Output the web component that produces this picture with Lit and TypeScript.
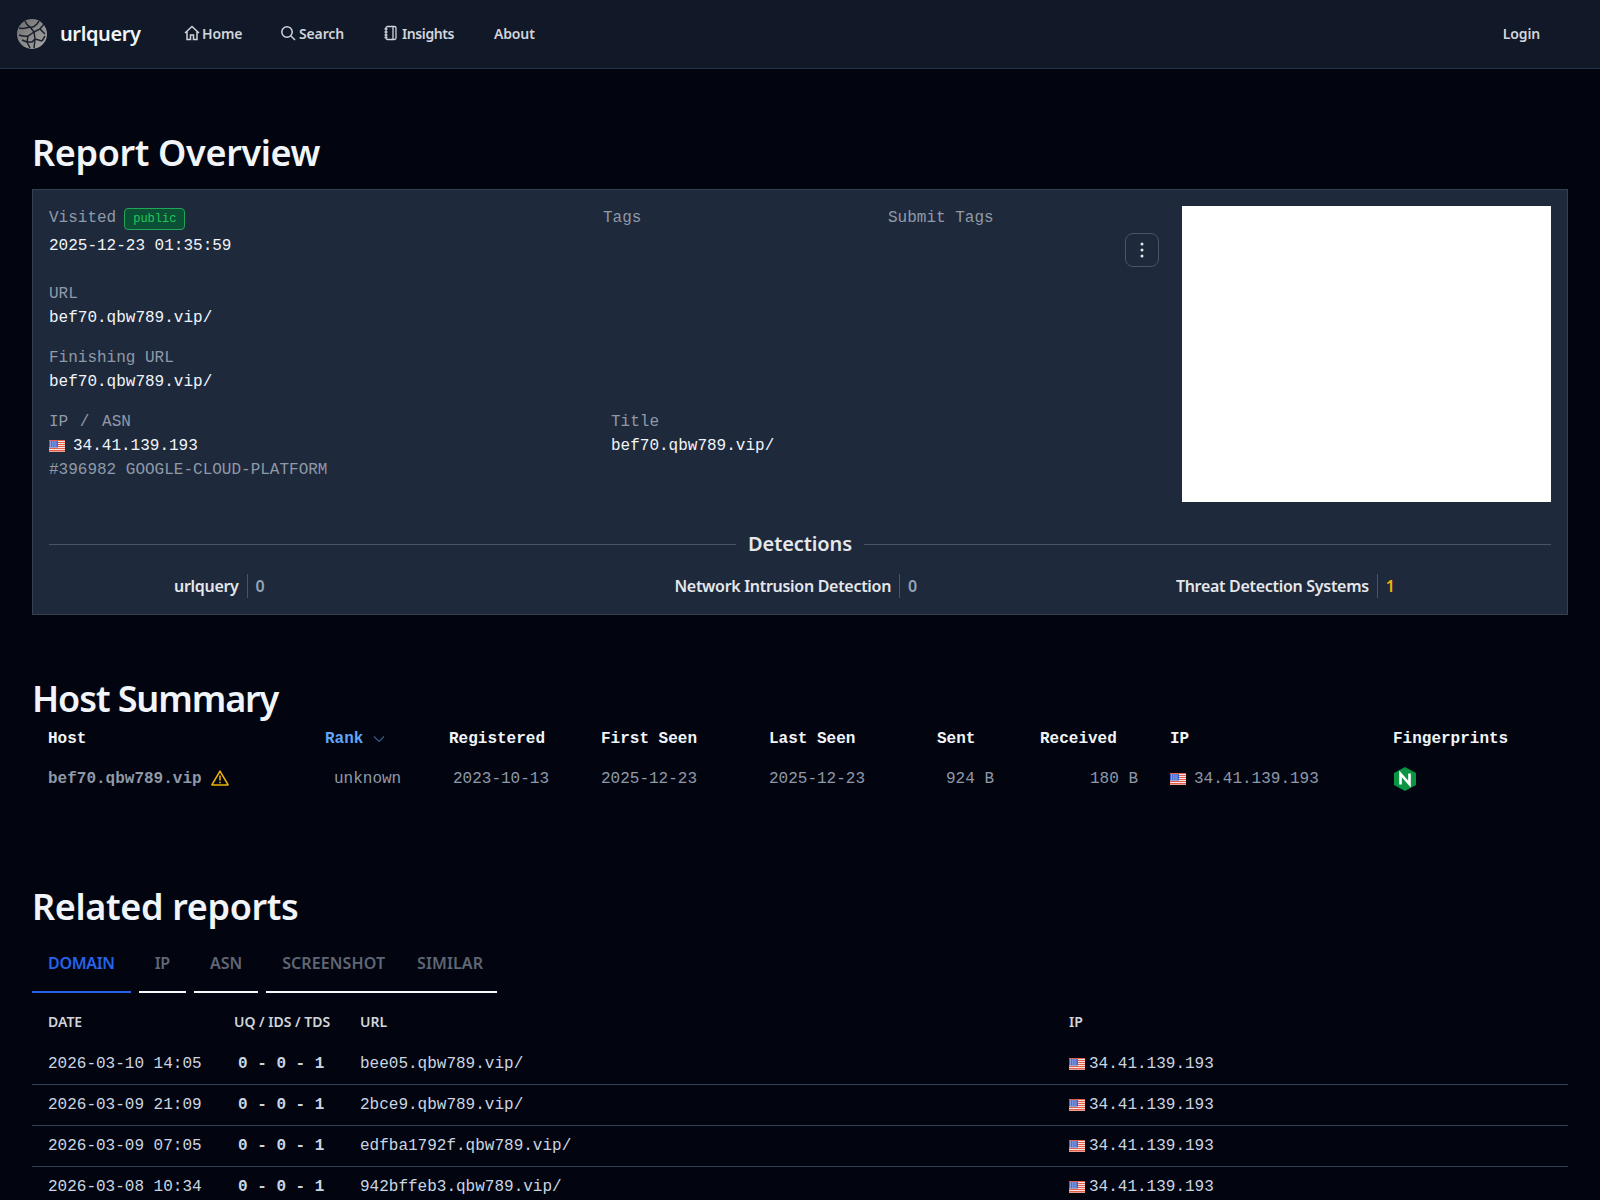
import { LitElement, html, css } from "lit";
import { customElement } from "lit/decorators.js";

const flag = html`<svg class="flag" viewBox="0 0 16 12" width="16" height="12" aria-hidden="true">
  <rect width="16" height="12" fill="#f7e4e0"/>
  <path d="M0 .5h16M0 2.5h16M0 4.5h16M0 6.5h16M0 8.5h16M0 10.5h16" stroke="#e0604c" stroke-width="1"/>
  <path d="M0 11.5h16" stroke="#e9a090" stroke-width="1"/>
  <rect x="0" y="1" width="9" height="6.5" fill="#3f63cc"/>
  <path d="M1 2h7M1 4h7M1 6h7" stroke="#e4eafa" stroke-width=".9" stroke-dasharray="1 .8"/>
</svg>`;

const rows = [
  ["2026-03-10 14:05", "bee05.qbw789.vip/"],
  ["2026-03-09 21:09", "2bce9.qbw789.vip/"],
  ["2026-03-09 07:05", "edfba1792f.qbw789.vip/"],
  ["2026-03-08 10:34", "942bffeb3.qbw789.vip/"],
];

@customElement("app-root")
export class AppRoot extends LitElement {
  static styles = css`
    :host {
      display: block;
      height: 1200px;
      overflow: hidden;
      background: #020510;
      --sans: "Noto Sans", "Open Sans", sans-serif;
      --mono: "Liberation Mono", monospace;
      font-family: var(--mono);
      font-size: 16px;
      color: #f1f5f9;
    }
    nav {
      height: 66px;
      padding: 0 60px 2px 17px;
      box-sizing: content-box;
      background: #111827;
      border-bottom: 1px solid #273244;
      display: flex;
      align-items: center;
      font-family: var(--sans);
      font-size: 14px;
      font-weight: 600;
      letter-spacing: -0.15px;
      color: #d1d5db;
    }
    .logo { margin-right: 13px; flex: none; margin-top: 2px; }
    .brand { font-size: 20px; font-weight: 600; letter-spacing: -0.4px; color: #f3f4f6; width: 124px; }
    .links { display: flex; flex: 1; }
    .link { display: flex; align-items: center; gap: 2px; white-space: nowrap; }
    .link svg { flex: none; }
    .i-gap1 { margin-right: 1px; }
    .l1 { width: 96px; }
    .l2 { width: 104px; }
    .l3 { width: 110px; letter-spacing: -0.4px; }
    .l3 svg { margin-left: -1px; }
    main { padding: 0 32px; }
    h2 {
      font-family: var(--sans);
      font-size: 36px;
      line-height: 40px;
      font-weight: 600;
      color: #f1f5f9;
      margin: 0;
    }
    .h-report { padding-top: 64px; margin-bottom: 16px; letter-spacing: -0.35px; }
    .card {
      background: #1e293b;
      border: 1px solid #334155;
      padding: 16px;
      height: 392px;
      box-sizing: content-box;
    }
    .top { display: grid; grid-template-columns: 1fr 369px; gap: 0 23px; height: 296px; }
    .cols { display: grid; grid-template-columns: 554px 285px 1fr; }
    .label { color: #8f99a8; line-height: 24px; }
    .value { color: #f1f5f9; line-height: 24px; white-space: nowrap; }
    .muted { color: #8f99a8; line-height: 24px; white-space: nowrap; }
    .sl { margin-left: 2px; }
    .asn { margin-left: 3px; }
    .visited { display: flex; gap: 8px; align-items: flex-start; height: 28px; }
    .badge {
      font-size: 12px;
      line-height: 20px;
      color: #22c55e;
      background: #0b5034;
      border: 1px solid #22a559;
      border-radius: 4px;
      padding: 0 8px;
      margin-top: 2px;
    }
    .group { margin-top: 24px; }
    .group + .group { margin-top: 16px; }
    .submit { position: relative; }
    .kebab {
      position: absolute;
      right: 0;
      top: 27px;
      width: 32px;
      height: 32px;
      border: 1px solid #475569;
      border-radius: 8px;
      display: flex;
      align-items: center;
      justify-content: center;
    }
    .ip-row { display: grid; grid-template-columns: 562px 1fr; margin-top: 16px; }
    .ip { display: flex; align-items: center; gap: 8px; }
    .shot { background: #fff; }
    .divider {
      display: flex;
      align-items: center;
      gap: 12px;
      margin-top: 28px;
      font-family: var(--sans);
      font-size: 20px;
      font-weight: 600;
      letter-spacing: -0.1px;
      line-height: 28px;
      color: #e5e7eb;
    }
    .divider::before, .divider::after { content: ""; flex: 1; height: 1px; background: #475569; }
    .det { display: flex; margin-top: 16px; font-family: var(--sans); font-size: 16px; font-weight: 600; letter-spacing: -0.3px; color: #e5e7eb; line-height: 24px; }
    .det > div { display: flex; white-space: nowrap; }
    .d1 { margin-left: 125px; }
    .d2 { margin-left: 410px; }
    .d3 { margin-left: 259px; }
    .det b { font-weight: 600; margin-left: 8px; padding-left: 8px; border-left: 1px solid #475569; color: #94a3b8; }
    .det b.warn { color: #eab308; }
    .h-host { padding-top: 64px; letter-spacing: -1.1px; }
    .htable { display: grid; grid-template-columns: 277px 124px 152px 168px 168px 103px 130px 223px 1fr; padding-left: 16px; margin-top: 2px; }
    .hh { font-weight: 700; line-height: 24px; color: #f1f5f9; white-space: nowrap; padding: 6px 0 8px; }
    .hd { color: #8f99a8; line-height: 24px; white-space: nowrap; padding: 8px 0; display: flex; align-items: center; }
    .rank { color: #60a5fa; display: flex; align-items: center; gap: 10px; }
    .host { font-weight: 700; gap: 9px; }
    .warn-i { margin-top: -2px; }
    .pl9 { padding-left: 9px; }
    .pl4 { padding-left: 4px; }
    .pl2 { padding-left: 2px; }
    .pl1 { padding-left: 1px; }
    .h-related { padding-top: 88px; letter-spacing: -0.35px; }
    .tabs { display: flex; gap: 8px; margin-top: 10px; font-family: var(--sans); font-size: 16px; font-weight: 600; letter-spacing: -0.3px; color: #5f6675; }
    .tab { height: 56px; line-height: 52px; box-sizing: border-box; border-bottom: 2px solid #f8fafc; padding: 0 16px; white-space: nowrap; }
    .tab.active { color: #2563eb; border-color: #2563eb; }
    .tab.plain { letter-spacing: 0; }
    .tab.wide { display: flex; gap: 32px; letter-spacing: 0.1px; padding-right: 14px; }
    .rt-head, .rt-row { display: grid; grid-template-columns: 186px 126px 709px 1fr; padding-left: 16px; }
    .rt-head { font-family: var(--sans); font-size: 14px; font-weight: 600; color: #d1d5db; line-height: 20px; padding-top: 19px; padding-bottom: 12px; }
    .rt-row { height: 41px; box-sizing: border-box; align-items: center; line-height: 24px; color: #cbd5e1; border-bottom: 1px solid #334155; white-space: nowrap; }
    .rt-row:last-child { border-bottom-color: transparent; }
    .score { font-weight: 700; padding-left: 4px; }
    .rip { display: flex; align-items: center; gap: 4px; }
  `;

  render() {
    return html`
      <nav>
        <svg class="logo" width="30" height="30" viewBox="0 0 30 30" aria-hidden="true">
          <defs><linearGradient id="g" x1="0" y1="0" x2="1" y2="1"><stop offset="0" stop-color="#6e6e6e"/><stop offset="1" stop-color="#a8a8a8"/></linearGradient></defs>
          <circle cx="15" cy="15" r="15" fill="url(#g)"/>
          <path d="M8 2c1 3 3 5 5 6s5-1 7-3l2-3M13 8c-3 1-7 2-11 1M13 8l4 5 6-3 4-5M2 16c3 1 6 2 9 1l6-4M11 17l-1 6 3 6M17 13l1 7 7 2M18 20l-3 3-5 0M5 21l5 2M23 10l5 5M25 22l3-5M18 20l-1 9" fill="none" stroke="#1a202c" stroke-width="1.5"/>
        </svg>
        <div class="brand">urlquery</div>
        <div class="links">
          <div class="link l1"><svg width="16" height="16" viewBox="0 0 16 16" fill="none" stroke="currentColor" stroke-width="1.5"><path d="M1 8 8 1.5 15 8M3 6.5V14.5H6.5V10H9.5V14.5H13V6.5"/></svg>Home</div>
          <div class="link l2"><svg class="i-gap1" width="16" height="16" viewBox="0 0 16 16" fill="none" stroke="currentColor" stroke-width="1.5"><circle cx="7" cy="7" r="5.2"/><path d="m11 11 4 4"/></svg>Search</div>
          <div class="link l3"><svg class="i-gap1" width="16" height="16" viewBox="0 0 16 16" fill="none" stroke="currentColor" stroke-width="1.3"><rect x="3" y="1.5" width="10" height="13" rx="1.5"/><path d="M10 1.5v13M1.5 4h3M1.5 7h3M1.5 10h3M1.5 12.5h3"/></svg>Insights</div>
          <div class="link">About</div>
        </div>
        <div>Login</div>
      </nav>
      <main>
        <h2 class="h-report">Report Overview</h2>
        <section class="card">
          <div class="top">
            <div>
              <div class="cols">
                <div>
                  <div class="visited"><span class="label">Visited</span><span class="badge">public</span></div>
                  <div class="value">2025-12-23 01:35:59</div>
                  <div class="group"><div class="label">URL</div><div class="value">bef70.qbw789.vip/</div></div>
                  <div class="group"><div class="label">Finishing URL</div><div class="value">bef70.qbw789.vip/</div></div>
                </div>
                <div class="label">Tags</div>
                <div class="label submit">Submit Tags
                  <div class="kebab"><svg width="4" height="16" viewBox="0 0 4 16" fill="#e5e7eb"><circle cx="2" cy="2" r="1.5"/><circle cx="2" cy="8" r="1.5"/><circle cx="2" cy="14" r="1.5"/></svg></div>
                </div>
              </div>
              <div class="ip-row">
                <div>
                  <div class="label">IP <span class="sl">/</span> <span class="asn">ASN</span></div>
                  <div class="value ip">${flag}<span>34.41.139.193</span></div>
                  <div class="muted">#396982 GOOGLE-CLOUD-PLATFORM</div>
                </div>
                <div>
                  <div class="label">Title</div>
                  <div class="value">bef70.qbw789.vip/</div>
                </div>
              </div>
            </div>
            <div class="shot"></div>
          </div>
          <div class="divider">Detections</div>
          <div class="det">
            <div class="d1">urlquery<b>0</b></div>
            <div class="d2">Network Intrusion Detection<b>0</b></div>
            <div class="d3">Threat Detection Systems<b class="warn">1</b></div>
          </div>
        </section>

        <h2 class="h-host">Host Summary</h2>
        <div class="htable">
          <div class="hh">Host</div>
          <div class="hh rank">Rank <svg width="12" height="8" viewBox="0 0 12 8" fill="none" stroke="#3b5b8c" stroke-width="1.2"><path d="m1 1.5 5 5 5-5"/></svg></div>
          <div class="hh">Registered</div>
          <div class="hh">First Seen</div>
          <div class="hh">Last Seen</div>
          <div class="hh">Sent</div>
          <div class="hh">Received</div>
          <div class="hh">IP</div>
          <div class="hh">Fingerprints</div>

          <div class="hd host">bef70.qbw789.vip
            <svg class="warn-i" width="18" height="16" viewBox="0 0 18 16" fill="none" stroke="#eab308" stroke-width="1.6"><path d="M9 1.2 1 14.6a.3.3 0 0 0 .2.4h15.6a.3.3 0 0 0 .2-.4Z" stroke-linejoin="round"/><path d="M9 5.5v5M9 11.8v1.4"/></svg>
          </div>
          <div class="hd pl9">unknown</div>
          <div class="hd pl4">2023-10-13</div>
          <div class="hd">2025-12-23</div>
          <div class="hd">2025-12-23</div>
          <div class="hd pl9">924 B</div>
          <div class="hd pl2">&nbsp;&nbsp;&nbsp;&nbsp;&nbsp;180 B</div>
          <div class="hd ip">${flag}<span>34.41.139.193</span></div>
          <div class="hd pl1"><svg width="22" height="24" viewBox="0 0 22 24"><path d="M11 0 22 6v12l-11 6-11-6V6Z" fill="#0b9444"/><path d="M6.5 17.5V7l9 10V6.5" fill="none" stroke="#fff" stroke-width="2.6"/></svg></div>
        </div>

        <h2 class="h-related">Related reports</h2>
        <div class="tabs">
          <div class="tab active">DOMAIN</div>
          <div class="tab">IP</div>
          <div class="tab plain">ASN</div>
          <div class="tab wide"><span>SCREENSHOT</span><span>SIMILAR</span></div>
        </div>
        <div class="rt-head"><div>DATE</div><div>UQ / IDS / TDS</div><div>URL</div><div>IP</div></div>
        ${rows.map(
          (r) => html`<div class="rt-row">
            <div>${r[0]}</div>
            <div class="score">0 - 0 - 1</div>
            <div>${r[1]}</div>
            <div class="rip">${flag}<span>34.41.139.193</span></div>
          </div>`
        )}
      </main>
    `;
  }
}
